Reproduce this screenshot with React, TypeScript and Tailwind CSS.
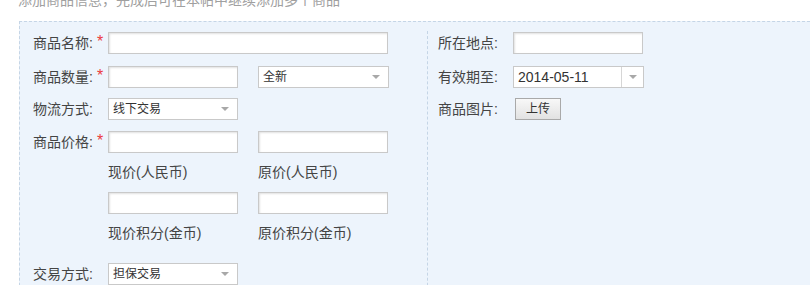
import React from "react";

const font = "font-['Liberation_Sans','Noto_Sans_CJK_SC',sans-serif]";

function Input({ w }: { w: string }) {
  return (
    <div
      className={`${w} h-[22px] bg-white border border-[#c9c9c9] shadow-[inset_1px_1px_2px_rgba(0,0,0,0.12)]`}
    />
  );
}

function Arrow() {
  return (
    <div className="w-0 h-0 border-x-[4px] border-x-transparent border-t-[4px] border-t-[#a8a8a8]" />
  );
}

function Select({ w, text }: { w: string; text: string }) {
  return (
    <div
      className={`${w} h-[22px] bg-white border border-[#c9c9c9] flex items-center justify-between pl-[4px] pr-[8px] text-[12px] text-[#333] leading-[20px]`}
    >
      <span>{text}</span>
      <Arrow />
    </div>
  );
}

function Label({ text, req }: { text: string; req?: boolean }) {
  return (
    <div className="w-[75px] shrink-0 flex items-center text-[14px] leading-[20px] text-[#444]">
      <span>{text}</span>
      {req && <span className="ml-[4px] text-[#ec3b3b] text-[16px] leading-[14px] -mt-[2px]">*</span>}
    </div>
  );
}

export default function App() {
  return (
    <div className={`w-[810px] h-[285px] overflow-hidden bg-white ${font}`}>
      <div className="h-[20px] -mt-[10px] mb-[11px] pl-[18px] text-[14px] leading-[20px] text-[#a0a0a0] whitespace-nowrap">
        添加商品信息，完成后可在本帖中继续添加多个商品
      </div>
      <div className="ml-[19px] h-[300px] border-t border-l border-dashed border-[#c5d5e6] bg-[#edf4fc] flex">
        {/* left column */}
        <div className="w-[407px] shrink-0 pl-[13px] pt-[10px]">
          <div className="flex items-center h-[22px]">
            <Label text="商品名称:" req />
            <Input w="w-[280px]" />
          </div>
          <div className="flex items-center h-[22px] mt-[12px]">
            <Label text="商品数量:" req />
            <Input w="w-[130px]" />
            <div className="ml-[20px]">
              <Select w="w-[131px]" text="全新" />
            </div>
          </div>
          <div className="flex items-center h-[22px] mt-[10px]">
            <Label text="物流方式:" />
            <Select w="w-[130px]" text="线下交易" />
          </div>
          <div className="flex items-center h-[22px] mt-[11px]">
            <Label text="商品价格:" req />
            <Input w="w-[130px]" />
            <div className="ml-[20px]">
              <Input w="w-[130px]" />
            </div>
          </div>
          <div className="flex h-[20px] mt-[9px] pl-[75px] text-[14px] leading-[20px] text-[#444]">
            <span className="w-[150px]">现价(人民币)</span>
            <span>原价(人民币)</span>
          </div>
          <div className="flex h-[22px] mt-[10px] pl-[75px]">
            <Input w="w-[130px]" />
            <div className="ml-[20px]">
              <Input w="w-[130px]" />
            </div>
          </div>
          <div className="flex h-[20px] mt-[9px] pl-[75px] text-[14px] leading-[20px] text-[#444]">
            <span className="w-[150px]">现价积分(金币)</span>
            <span>原价积分(金币)</span>
          </div>
          <div className="flex items-center h-[22px] mt-[20px]">
            <Label text="交易方式:" />
            <Select w="w-[130px]" text="担保交易" />
          </div>
        </div>
        {/* right column */}
        <div className="flex-1 mt-[9px] border-l border-dashed border-[#c5d5e6] pl-[10px] pt-[1px]">
          <div className="flex items-center h-[22px]">
            <Label text="所在地点:" />
            <Input w="w-[130px]" />
          </div>
          <div className="flex items-center h-[22px] mt-[12px]">
            <Label text="有效期至:" />
            <div className="w-[131px] h-[22px] bg-white border border-[#c9c9c9] flex items-center text-[14px] text-[#333] leading-[20px]">
              <span className="flex-1 pl-[4px]">2014-05-11</span>
              <div className="w-[22px] h-full border-l border-[#d6d6d6] flex items-center justify-center">
                <Arrow />
              </div>
            </div>
          </div>
          <div className="flex items-center h-[22px] mt-[10px]">
            <Label text="商品图片:" />
            <button className="ml-[2px] w-[46px] h-[22px] border border-[#a9a9a9] bg-gradient-to-b from-[#f8f8f8] to-[#e2e2e2] text-[12px] leading-[20px] text-[#333] flex items-center justify-center">
              上传
            </button>
          </div>
        </div>
      </div>
    </div>
  );
}
